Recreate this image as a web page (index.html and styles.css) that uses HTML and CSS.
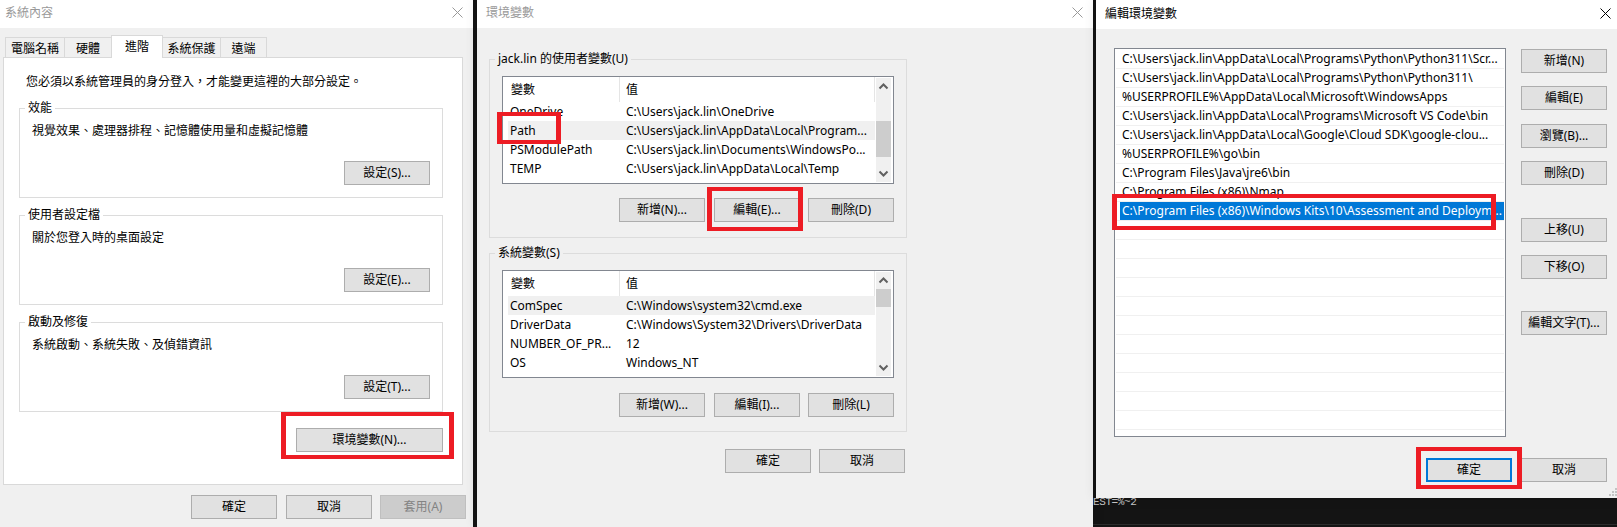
FILE: index.html
```html
<!DOCTYPE html>
<html lang="zh-Hant">

<head>
    <meta charset="UTF-8">
    <meta name="viewport" content="width=device-width, initial-scale=1.0">
    <title>環境變數</title>
    <link rel="stylesheet" href="styles.css">
</head>

<body>
    <div class="desktop">
        <div class="terminal">
            <div class="terminal-line">EST=%~2</div>
        </div>

        <!-- 系統內容 -->
        <section class="window window-system">
            <div class="titlebar titlebar-muted">
                <span>系統內容</span>
                <svg class="close" viewBox="0 0 11 11"><path d="M0.5 0.5 10.5 10.5M10.5 0.5 0.5 10.5" /></svg>
            </div>
            <div class="tabs">
                <div class="tab tab-name">電腦名稱</div>
                <div class="tab tab-hardware">硬體</div>
                <div class="tab tab-active">進階</div>
                <div class="tab tab-protect">系統保護</div>
                <div class="tab tab-remote">遠端</div>
            </div>
            <div class="tab-panel">
                <p class="note">您必須以系統管理員的身分登入，才能變更這裡的大部分設定。</p>
                <fieldset class="group group-setting">
                    <legend>效能</legend>
                    <p class="group-text">視覺效果、處理器排程、記憶體使用量和虛擬記憶體</p>
                    <button class="btn">設定(S)...</button>
                </fieldset>
                <fieldset class="group group-setting">
                    <legend>使用者設定檔</legend>
                    <p class="group-text">關於您登入時的桌面設定</p>
                    <button class="btn">設定(E)...</button>
                </fieldset>
                <fieldset class="group group-setting">
                    <legend>啟動及修復</legend>
                    <p class="group-text">系統啟動、系統失敗、及偵錯資訊</p>
                    <button class="btn">設定(T)...</button>
                </fieldset>
                <button class="btn btn-env">環境變數(N)...</button>
            </div>
            <div class="footer footer-system">
                <button class="btn">確定</button>
                <button class="btn">取消</button>
                <button class="btn btn-disabled">套用(A)</button>
            </div>
        </section>

        <!-- 環境變數 -->
        <section class="window window-env">
            <div class="titlebar titlebar-muted titlebar-env">
                <span>環境變數</span>
                <svg class="close" viewBox="0 0 11 11"><path d="M0.5 0.5 10.5 10.5M10.5 0.5 0.5 10.5" /></svg>
            </div>
            <fieldset class="group group-vars">
                <legend>jack.lin 的使用者變數(U)</legend>
                <div class="varlist">
                    <div class="varlist-body">
                        <div class="var-head">
                            <div class="var-head-name">變數</div>
                            <div class="var-head-value">值</div>
                        </div>
                        <div class="var-row"><div class="var-name">OneDrive</div><div class="var-value">C:\Users\jack.lin\OneDrive</div></div>
                        <div class="var-row var-row-current"><div class="var-name">Path</div><div class="var-value">C:\Users\jack.lin\AppData\Local\Program...</div></div>
                        <div class="var-row"><div class="var-name">PSModulePath</div><div class="var-value">C:\Users\jack.lin\Documents\WindowsPo...</div></div>
                        <div class="var-row"><div class="var-name">TEMP</div><div class="var-value">C:\Users\jack.lin\AppData\Local\Temp</div></div>
                        <div class="var-row var-row-clipped"><div class="var-name">TMP</div><div class="var-value">C:\Users\jack.lin\AppData\Local\Temp</div></div>
                    </div>
                    <div class="scrollbar">
                        <svg class="arrow" viewBox="0 0 15 17"><path d="M3.5 10.5 7.5 6.5 11.5 10.5" /></svg>
                        <div class="track"><div class="thumb thumb-user"></div></div>
                        <svg class="arrow" viewBox="0 0 15 17"><path d="M3.5 6.5 7.5 10.5 11.5 6.5" /></svg>
                    </div>
                </div>
                <div class="btn-row">
                    <button class="btn">新增(N)...</button>
                    <button class="btn">編輯(E)...</button>
                    <button class="btn">刪除(D)</button>
                </div>
            </fieldset>
            <fieldset class="group group-vars group-sys">
                <legend>系統變數(S)</legend>
                <div class="varlist">
                    <div class="varlist-body">
                        <div class="var-head">
                            <div class="var-head-name">變數</div>
                            <div class="var-head-value">值</div>
                        </div>
                        <div class="var-row var-row-current"><div class="var-name">ComSpec</div><div class="var-value">C:\Windows\system32\cmd.exe</div></div>
                        <div class="var-row"><div class="var-name">DriverData</div><div class="var-value">C:\Windows\System32\Drivers\DriverData</div></div>
                        <div class="var-row"><div class="var-name">NUMBER_OF_PR...</div><div class="var-value">12</div></div>
                        <div class="var-row"><div class="var-name">OS</div><div class="var-value">Windows_NT</div></div>
                        <div class="var-row var-row-clipped"><div class="var-name">Path</div><div class="var-value">C:\Program Files\Java\jre6\bin;C:\Windows</div></div>
                    </div>
                    <div class="scrollbar">
                        <svg class="arrow" viewBox="0 0 15 17"><path d="M3.5 10.5 7.5 6.5 11.5 10.5" /></svg>
                        <div class="track"><div class="thumb thumb-sys"></div></div>
                        <svg class="arrow" viewBox="0 0 15 17"><path d="M3.5 6.5 7.5 10.5 11.5 6.5" /></svg>
                    </div>
                </div>
                <div class="btn-row">
                    <button class="btn">新增(W)...</button>
                    <button class="btn">編輯(I)...</button>
                    <button class="btn">刪除(L)</button>
                </div>
            </fieldset>
            <div class="footer footer-env">
                <button class="btn">確定</button>
                <button class="btn">取消</button>
            </div>
        </section>

        <!-- 編輯環境變數 -->
        <section class="window window-edit">
            <div class="titlebar titlebar-edit">
                <span>編輯環境變數</span>
                <svg class="close" viewBox="0 0 11 11"><path d="M0.5 0.5 10.5 10.5M10.5 0.5 0.5 10.5" /></svg>
            </div>
            <div class="edit-main">
                <div class="pathlist">
                    <div class="path-row"><span class="path-cell">C:\Users\jack.lin\AppData\Local\Programs\Python\Python311\Scr...</span></div>
                    <div class="path-row"><span class="path-cell">C:\Users\jack.lin\AppData\Local\Programs\Python\Python311\</span></div>
                    <div class="path-row"><span class="path-cell">%USERPROFILE%\AppData\Local\Microsoft\WindowsApps</span></div>
                    <div class="path-row"><span class="path-cell">C:\Users\jack.lin\AppData\Local\Programs\Microsoft VS Code\bin</span></div>
                    <div class="path-row"><span class="path-cell">C:\Users\jack.lin\AppData\Local\Google\Cloud SDK\google-clou...</span></div>
                    <div class="path-row"><span class="path-cell">%USERPROFILE%\go\bin</span></div>
                    <div class="path-row"><span class="path-cell">C:\Program Files\Java\jre6\bin</span></div>
                    <div class="path-row"><span class="path-cell">C:\Program Files (x86)\Nmap</span></div>
                    <div class="path-row"><span class="path-cell path-cell-selected">C:\Program Files (x86)\Windows Kits\10\Assessment and Deploym...</span></div>
                    <div class="path-row"></div>
                    <div class="path-row"></div>
                    <div class="path-row"></div>
                    <div class="path-row"></div>
                    <div class="path-row"></div>
                    <div class="path-row"></div>
                    <div class="path-row"></div>
                    <div class="path-row"></div>
                    <div class="path-row"></div>
                    <div class="path-row"></div>
                    <div class="path-row"></div>
                </div>
                <div class="side">
                    <button class="btn">新增(N)</button>
                    <button class="btn">編輯(E)</button>
                    <button class="btn side-gap-1">瀏覽(B)...</button>
                    <button class="btn">刪除(D)</button>
                    <button class="btn side-gap-20">上移(U)</button>
                    <button class="btn">下移(O)</button>
                    <button class="btn side-gap-19">編輯文字(T)...</button>
                </div>
            </div>
            <div class="footer footer-edit">
                <button class="btn btn-default">確定</button>
                <button class="btn">取消</button>
            </div>
            <svg class="grip" viewBox="0 0 10 10">
                <rect x="8" y="0" width="2" height="2" />
                <rect x="5" y="3" width="2" height="2" />
                <rect x="8" y="3" width="2" height="2" />
                <rect x="2" y="6" width="2" height="2" />
                <rect x="5" y="6" width="2" height="2" />
                <rect x="8" y="6" width="2" height="2" />
            </svg>
        </section>

        <!-- 紅框標示 -->
        <div class="mark mark-env"></div>
        <div class="mark mark-path"></div>
        <div class="mark mark-edit"></div>
        <div class="mark mark-selected"></div>
        <div class="mark mark-ok"></div>
    </div>
</body>

</html>
```

FILE: styles.css
```css
* {
    box-sizing: border-box;
}

body {
    margin: 0;
    font-family: "Noto Sans", "Noto Sans CJK TC", sans-serif;
    font-size: 12px;
    line-height: 18px;
    color: #000;
    background-color: #141414;
}

p {
    margin: 0;
}

.desktop {
    position: relative;
    width: 1617px;
    height: 527px;
    overflow: hidden;
    background-color: #141414;
}

/* windows on the desktop */
.window {
    position: absolute;
    top: 0;
    background-color: #f0f0f0;
}

.window-system {
    left: 0;
    width: 473px;
    height: 527px;
}

.window-env {
    left: 477px;
    width: 616px;
    height: 527px;
    box-shadow: 0 0 12px rgba(0, 0, 0, 0.12);
}

.window-edit {
    left: 1096px;
    width: 521px;
    height: 498px;
    box-shadow: 0 0 12px rgba(0, 0, 0, 0.12);
}

.terminal {
    position: absolute;
    left: 1093px;
    top: 498px;
    width: 524px;
    height: 27px;
    border-bottom: 1px solid #2c2c2c;
    color: #c8c8c8;
    font-family: "Liberation Mono", monospace;
    font-size: 11px;
    letter-spacing: -0.4px;
    line-height: 9px;
}

.titlebar {
    display: flex;
    justify-content: space-between;
    align-items: center;
    height: 28px;
    padding: 0 10px 4px 5px;
    background-color: #fff;
}

.titlebar span {
    position: relative;
    top: 1px;
}

.titlebar-muted {
    color: #999;
}

.titlebar-env {
    padding-left: 9px;
}

.titlebar-edit {
    height: 29px;
    padding: 0 6px 3px 9px;
}

.close {
    width: 11px;
    height: 11px;
    fill: none;
    stroke: #000;
    stroke-width: 1;
}

.titlebar-muted .close {
    stroke: #999;
}

/* tabs */
.tabs {
    display: flex;
    align-items: flex-end;
    height: 22px;
    margin-top: 7px;
    padding-left: 5px;
}

.tab {
    height: 20px;
    margin-right: -1px;
    border: 1px solid #d9d9d9;
    border-bottom: none;
    line-height: 21px;
    text-align: center;
}

.tab-name {
    width: 60px;
}

.tab-hardware {
    width: 48px;
}

.tab-protect {
    width: 59px;
}

.tab-remote {
    width: 47px;
}

.tab-active {
    position: relative;
    z-index: 1;
    width: 52px;
    height: 23px;
    margin-bottom: -1px;
    background-color: #fff;
}

.tab-panel {
    display: flex;
    flex-direction: column;
    width: 460px;
    height: 428px;
    margin-left: 3px;
    border: 1px solid #d9d9d9;
    background-color: #fff;
}

.note {
    margin: 15px 0 0 22px;
}

/* group boxes */
.group {
    display: flex;
    flex-direction: column;
    min-width: 0;
    margin: 0;
    padding: 0;
    border: 1px solid #dcdcdc;
}

.group legend {
    margin-left: 5px;
    padding: 0 3px;
    line-height: 18px;
}

.group-setting {
    width: 424px;
    height: 99px;
    margin: 8px 0 0 15px;
}

.group-setting .btn {
    align-self: flex-end;
    margin: 21px 12px 0 0;
}

.group-text {
    margin: 5px 0 0 12px;
}

.group-vars {
    width: 418px;
    height: 188px;
    margin: 22px 0 0 12px;
}

.group-sys {
    margin-top: 6px;
}

/* buttons */
.btn {
    width: 86px;
    height: 24px;
    padding: 0;
    border: 1px solid #adadad;
    background-color: #e1e1e1;
    color: #000;
    font: inherit;
    white-space: nowrap;
}

.btn-env {
    align-self: flex-end;
    width: 147px;
    margin: 16px 19px 0 0;
}

.btn-disabled {
    border-color: #bfbfbf;
    background-color: #ccc;
    color: #838383;
}

.btn-default {
    border: 2px solid #0078d7;
}

.btn-row {
    display: flex;
    justify-content: flex-end;
    gap: 8px;
    margin: 14px 12px 0 0;
}

.btn-row .btn:first-child {
    margin-right: 1px;
}

.group-sys .btn-row {
    margin-top: 15px;
}

.footer {
    display: flex;
    justify-content: flex-end;
    gap: 8px;
}

.footer-system {
    margin-top: 10px;
    padding-right: 7px;
}

.footer-system .btn:first-child {
    margin-right: 1px;
}

.footer-env {
    width: 428px;
    margin-top: 17px;
}

.footer-edit {
    gap: 9px;
    margin-top: 21px;
    padding-right: 10px;
}

/* list views */
.varlist {
    display: flex;
    width: 392px;
    height: 108px;
    margin: 8px 0 0 12px;
    border: 1px solid #828790;
    background-color: #fff;
    overflow: hidden;
}

.varlist-body {
    width: 372px;
    overflow: hidden;
}

.var-head {
    display: flex;
    height: 25px;
    line-height: 25px;
}

.var-head-name {
    width: 117px;
    padding-left: 8px;
    border-right: 1px solid #e5e5e5;
}

.var-head-value {
    flex: 1;
    padding-left: 6px;
    border-right: 1px solid #e5e5e5;
}

.var-row {
    display: flex;
    height: 19px;
    margin-left: 5px;
    line-height: 19px;
    white-space: nowrap;
}

.var-row-current {
    background-color: #f0f0f0;
}

.var-row-clipped {
    padding-top: 1px;
}

.var-name {
    width: 112px;
    padding-left: 2px;
    overflow: hidden;
}

.var-value {
    flex: 1;
    padding-left: 6px;
    overflow: hidden;
}

.scrollbar {
    display: flex;
    flex-direction: column;
    width: 15px;
    margin: 1px 2px 1px 1px;
    background-color: #f0f0f0;
}

.arrow {
    flex: none;
    width: 15px;
    height: 17px;
    fill: none;
    stroke: #606060;
    stroke-width: 2;
}

.track {
    flex: 1;
}

.thumb {
    background-color: #cdcdcd;
}

.thumb-user {
    height: 36px;
    margin-top: 26px;
}

.thumb-sys {
    height: 18px;
}

.pathlist {
    width: 392px;
    height: 389px;
    padding: 1px 1px 0;
    border: 1px solid #828790;
    background-color: #fff;
}

.path-row {
    height: 19px;
    padding-left: 4px;
    border-bottom: 1px solid #f0f0f0;
    line-height: 18px;
    white-space: nowrap;
    overflow: hidden;
}

.path-cell {
    display: block;
    padding-left: 2px;
}

.path-cell-selected {
    background-color: #0078d7;
    color: #fff;
}

.edit-main {
    display: flex;
    gap: 15px;
    margin: 19px 0 0 18px;
}

.side {
    display: flex;
    flex-direction: column;
    gap: 13px;
    padding-top: 1px;
}

.side-gap-1 {
    margin-top: 1px;
}

.side-gap-19 {
    margin-top: 19px;
}

.side-gap-20 {
    margin-top: 20px;
}

.grip {
    position: absolute;
    right: 0;
    bottom: 0;
    width: 10px;
    height: 10px;
    fill: #c4c4c4;
}

/* red highlight boxes */
.mark {
    position: absolute;
    border: solid #ed1c24;
    border-width: 4px 5px;
}

.mark-env {
    left: 281px;
    top: 412px;
    width: 173px;
    height: 47px;
}

.mark-path {
    left: 497px;
    top: 112px;
    width: 64px;
    height: 32px;
}

.mark-edit {
    left: 707px;
    top: 187px;
    width: 96px;
    height: 44px;
}

.mark-selected {
    left: 1112px;
    top: 194px;
    width: 384px;
    height: 36px;
}

.mark-ok {
    left: 1416px;
    top: 447px;
    width: 106px;
    height: 42px;
}
```
